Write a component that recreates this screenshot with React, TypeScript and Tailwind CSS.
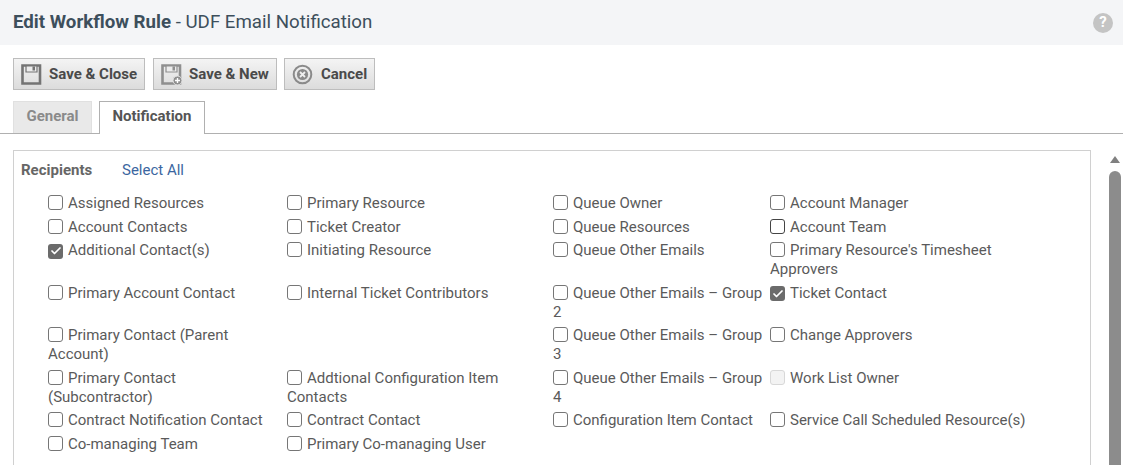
import React from 'react';
import { Check } from 'lucide-react';

type Item = { label: string; checked?: boolean; disabled?: boolean; dark?: boolean };

const rows: (Item | null)[][] = [
  [{ label: 'Assigned Resources' }, { label: 'Primary Resource' }, { label: 'Queue Owner' }, { label: 'Account Manager' }],
  [{ label: 'Account Contacts' }, { label: 'Ticket Creator' }, { label: 'Queue Resources' }, { label: 'Account Team', dark: true }],
  [{ label: 'Additional Contact(s)', checked: true }, { label: 'Initiating Resource' }, { label: 'Queue Other Emails' }, { label: "Primary Resource's Timesheet Approvers" }],
  [{ label: 'Primary Account Contact' }, { label: 'Internal Ticket Contributors' }, { label: 'Queue Other Emails – Group 2' }, { label: 'Ticket Contact', checked: true }],
  [{ label: 'Primary Contact (Parent Account)' }, null, { label: 'Queue Other Emails – Group 3' }, { label: 'Change Approvers' }],
  [{ label: 'Primary Contact (Subcontractor)' }, { label: 'Addtional Configuration Item Contacts' }, { label: 'Queue Other Emails – Group 4' }, { label: 'Work List Owner', disabled: true }],
  [{ label: 'Contract Notification Contact' }, { label: 'Contract Contact' }, { label: 'Configuration Item Contact' }, { label: 'Service Call Scheduled Resource(s)' }],
  [{ label: 'Co-managing Team' }, { label: 'Primary Co-managing User' }, null, null],
];

const Box: React.FC<{ item: Item }> = ({ item }) => {
  if (item.checked) {
    return (
      <span className="inline-flex align-[-2px] w-[15px] h-[15px] mr-[5px] rounded-[3px] bg-[#6b6b6b] items-center justify-center">
        <Check size={12} strokeWidth={3.5} className="text-white" />
      </span>
    );
  }
  if (item.disabled) {
    return <span className="inline-block align-[-2px] w-[15px] h-[15px] mr-[5px] rounded-[3px] border border-[#d8d8d8] bg-[#f3f3f3]" />;
  }
  return (
    <span
      className={
        item.dark
          ? 'inline-block align-[-2px] w-[15px] h-[15px] mr-[5px] rounded-[3px] border border-[#444] bg-white'
          : 'inline-block align-[-2px] w-[15px] h-[15px] mr-[5px] rounded-[3px] border border-[#767676] bg-white'
      }
    />
  );
};

const SaveIcon: React.FC<{ plus?: boolean }> = ({ plus }) => {
  const c = plus ? '#8f8f8f' : '#747474';
  return (
    <svg width="21" height="21" viewBox="0 0 21 21" className="shrink-0">
      <path d="M1.5 1.5h17.5v18H1.5z" fill="none" stroke={c} strokeWidth="2.6" />
      <path d="M5 2h11v6H5z" fill="#ececec" stroke={c} strokeWidth="1.2" />
      <path d="M11.5 2.5h2.5v4h-2.5z" fill={c} />
      {plus && (
        <>
          <circle cx="16.5" cy="16.5" r="4.5" fill={c} stroke="#e4e4e4" />
          <path d="M16.5 14v5M14 16.5h5" stroke="#fff" strokeWidth="1.4" />
        </>
      )}
    </svg>
  );
};

const CancelIcon = () => (
  <svg width="22" height="21" viewBox="0 0 22 21" className="shrink-0">
    <circle cx="10.5" cy="10.5" r="8.8" fill="none" stroke="#8a8a8a" strokeWidth="2" />
    <circle cx="10.5" cy="10.5" r="5.6" fill="#8a8a8a" />
    <path d="M8 8l5 5M13 8l-5 5" stroke="#efefef" strokeWidth="1.8" />
  </svg>
);

const Btn: React.FC<{ icon: React.ReactNode; label: string; className: string }> = ({ icon, label, className }) => (
  <button className={`${className} h-8 flex items-center gap-[7px] pl-[7px] border border-[#bdbdbd] bg-gradient-to-b from-[#f4f4f4] to-[#dcdcdc] text-[15px] font-bold text-[#4a4a4a]`}>
    {icon}
    <span>{label}</span>
  </button>
);

export default function App() {
  return (
    <div className="h-[465px] overflow-hidden bg-white font-['Roboto',sans-serif] text-[15px]">
      <div className="h-[45px] bg-[#f4f5f7] flex items-center justify-between pl-[13px] pr-[10px]">
        <div className="text-[18.7px] text-[#3d4f5c]">
          <span className="font-bold">Edit Workflow Rule</span> - UDF Email Notification
        </div>
        <div className="w-5 h-5 rounded-full bg-[#c4c4c4] text-white text-[15px] font-bold flex items-center justify-center">?</div>
      </div>

      <div className="flex pl-[13px] pt-[13px]">
        <Btn icon={<SaveIcon />} label="Save & Close" className="w-[132px] mr-2" />
        <Btn icon={<SaveIcon plus />} label="Save & New" className="w-[124px] mr-[7px]" />
        <Btn icon={<CancelIcon />} label="Cancel" className="w-[91px]" />
      </div>

      <div className="flex gap-[7px] pl-[13px] mt-[11px] h-[33px] border-b border-[#b0b0b0]">
        <div className="w-[79px] h-8 pb-[2px] bg-[#e9e9e9] border border-b-0 border-[#e0e0e0] flex items-center justify-center font-bold text-[#8a8a8a]">General</div>
        <div className="w-[106px] h-[33px] pb-[3px] bg-white border border-b-0 border-[#b0b0b0] flex items-center justify-center font-bold text-[#555]">Notification</div>
      </div>

      <div className="flex pl-[13px] pt-[16px]">
        <div className="w-[1078px] h-[400px] border border-[#d0d0d0] pl-[7px]">
          <div className="flex h-[36px] items-center mt-[1px]">
            <span className="w-[101px] font-bold text-[#666]">Recipients</span>
            <span className="text-[#3b66a0]">Select All</span>
          </div>
          <div className="grid grid-cols-[239px_266px_217px_270px] pl-[27px] leading-[19px] text-[#5a5a5a] mt-[4px]">
            {rows.map((row, r) =>
              row.map((item, c) => (
                <div key={`${r}-${c}`} className="py-[2.25px] pr-[5px]">
                  {item && (
                    <>
                      <Box item={item} />
                      {item.label}
                    </>
                  )}
                </div>
              )),
            )}
          </div>
        </div>
        <div className="ml-[18px] w-[12px] flex flex-col items-center">
          <div className="mt-[6px] w-0 h-0 border-x-[5.5px] border-x-transparent border-b-[7px] border-b-[#808080]" />
          <div className="mt-[8px] w-[12px] h-[400px] rounded-t-[6px] bg-[#8c8c8c]" />
        </div>
      </div>
    </div>
  );
}
